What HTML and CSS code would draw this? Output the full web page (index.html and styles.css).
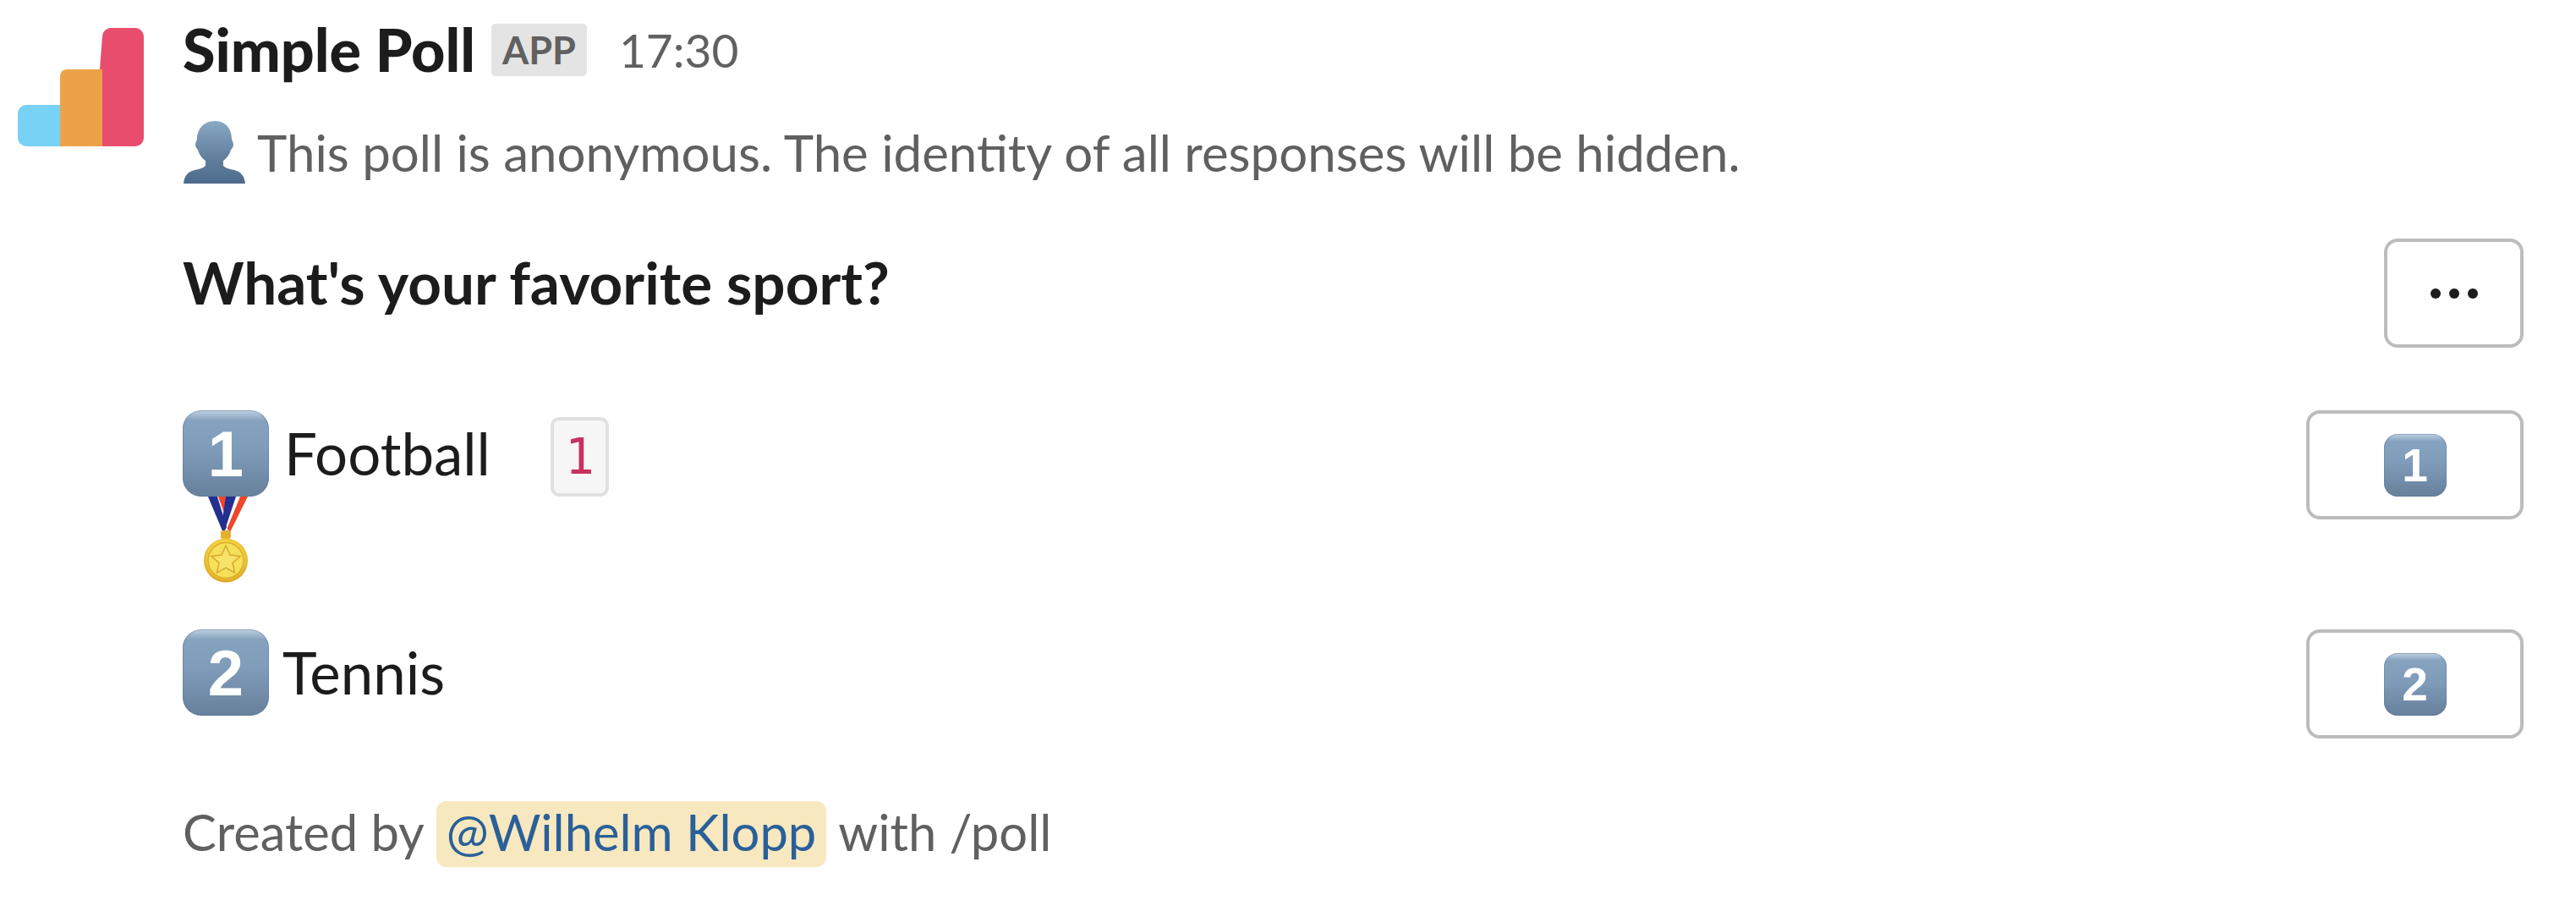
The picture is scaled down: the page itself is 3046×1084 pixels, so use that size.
FILE: index.html
```html
<!DOCTYPE html>
<html lang="en">
<head>
<meta charset="utf-8">
<title>Simple Poll</title>
<link rel="stylesheet" href="styles.css">
</head>
<body>
<svg class="defs" width="0" height="0" aria-hidden="true">
  <defs>
    <linearGradient id="person" x1="0" y1="0" x2="0" y2="1">
      <stop offset="0" stop-color="#8aa9c4"/>
      <stop offset="0.55" stop-color="#64819f"/>
      <stop offset="1" stop-color="#4c6b8b"/>
    </linearGradient>
    <radialGradient id="gold" cx="0.5" cy="0.45" r="0.55">
      <stop offset="0" stop-color="#fbe96a"/>
      <stop offset="0.75" stop-color="#f3cf3f"/>
      <stop offset="1" stop-color="#d9a021"/>
    </radialGradient>
  </defs>
</svg>
<main class="message">
  <svg class="logo" viewBox="0 0 149 140" aria-label="Simple Poll logo">
    <path fill="#e94d6e" d="M100 10a10 10 0 0 1 10-10h29a10 10 0 0 1 10 10v120a10 10 0 0 1-10 10h-49z"/>
    <path fill="#eda24a" d="M50 57a8 8 0 0 1 8-8h42v91H50z"/>
    <path fill="#78d2f6" d="M0 101a10 10 0 0 1 10-10h40v49H10a10 10 0 0 1-10-10z"/>
  </svg>
  <div class="content">
    <header class="head">
      <strong class="name">Simple Poll</strong>
      <span class="badge">APP</span>
      <span class="time">17:30</span>
    </header>
    <p class="context">
      <svg class="person" viewBox="0 0 74 74" aria-hidden="true">
        <path fill="url(#person)" d="M37 0c14 0 20 11 20 21 0 2 2 4 2 7 0 3-2 5-3 6-2 7-6 11-9 13v6c3 3 8 4 13 5 8 2 12 7 13 16H0c1-9 5-14 13-16 5-1 10-2 13-5v-6c-3-2-7-6-9-13-1-1-3-3-3-6 0-3 2-5 2-7C16 11 23 0 37 0z"/>
      </svg>
      This poll is anonymous. The identity of all responses will be hidden.
    </p>
    <section class="row question-row">
      <h1 class="question">What's your favorite sport?</h1>
      <button class="btn btn-more" aria-label="More"><i></i><i></i><i></i></button>
    </section>
    <section class="row option-row first">
      <div class="option">
        <div class="option-line">
          <span class="key key-lg">1</span>
          <span class="label football">Football</span>
          <code class="count">1</code>
        </div>
        <svg class="medal" viewBox="0 0 52 102" aria-hidden="true">
          <path fill="#f0462a" d="M17 0h9l5 16-5 9z"/>
          <path fill="#f0462a" d="M43 0h9L31 42l-4-3z"/>
          <path fill="#eef0f4" d="M26 36l5 6-3 3-4-4z"/>
          <path fill="#23308f" d="M5 0h11l11 36-4 7z"/>
          <path fill="#23308f" d="M26 0h12L25 39l-4-6z"/>
          <rect x="20" y="40" width="12" height="10" rx="3" fill="#e2b02f"/>
          <circle cx="26" cy="75.500" r="26" fill="url(#gold)"/>
          <circle cx="26" cy="75.500" r="21" fill="#f6e05a" stroke="#dcae2b" stroke-width="1.500"/>
          <path fill="#f8e26a" stroke="#d4a92f" stroke-width="1.500" d="M26 58l5 11 12 1.500-9 8 2.500 11.500L26 84l-10.500 6 2.500-11.500-9-8 12-1.500z"/>
        </svg>
      </div>
      <button class="btn btn-option"><span class="key key-sm">1</span></button>
    </section>
    <section class="row option-row second">
      <div class="option-line">
        <span class="key key-lg">2</span>
        <span class="label tennis">Tennis</span>
      </div>
      <button class="btn btn-option"><span class="key key-sm">2</span></button>
    </section>
    <footer class="foot">Created by <span class="mention">@Wilhelm Klopp</span> with /poll</footer>
  </div>
</main>
</body>
</html>
```

FILE: styles.css
```css
* { box-sizing: border-box; }
html, body { margin: 0; padding: 0; background: #fff; }
body { width: 3046px; height: 1084px; overflow: hidden; font-family: Lato, "Noto Sans", sans-serif; color: #1d1c1d; }
.defs { display: block; height: 0; }
.message { display: flex; align-items: flex-start; padding: 33px 62px 0 21px; }
.logo { width: 149px; height: 140px; flex: none; margin-right: 46px; }
.content { flex: 1; min-width: 0; margin-top: -33px; }
.head { display: flex; align-items: center; height: 118px; }
.name { font-size: 70px; font-weight: 900; margin-top: -3px; }
.badge { margin-left: 19px; padding: 0 13px; height: 62px; line-height: 62px; background: #e4e4e4; color: #616061; font-size: 45px; font-weight: 700; border-radius: 5px; }
.time { margin-left: 38px; font-size: 55px; color: #616061; }
.context { margin: 22px 0 0; height: 80px; display: flex; align-items: center; font-size: 60px; color: #616061; }
.person { width: 74px; height: 74px; margin: 0 13px 0 1px; flex: none; }
.row { display: flex; justify-content: space-between; align-items: flex-start; }
.question-row { margin-top: 62px; }
.question { margin: 0; padding-top: 12px; font-size: 69.200px; font-weight: 700; line-height: 80px; }
.btn { display: flex; align-items: center; justify-content: center; height: 129px; padding: 0; border: 4px solid #bcbcbc; border-radius: 16px; background: #fff; }
.btn-more { width: 165px; gap: 10px; }
.btn-more i { width: 12px; height: 12px; border-radius: 50%; background: #1d1c1d; }
.btn-option { width: 257px; }
.option-row.first { margin-top: 74px; }
.option-row.second { margin-top: 55px; }
.option-line { display: flex; align-items: flex-start; }
.key { display: flex; align-items: center; justify-content: center; color: #fff; font-family: "Liberation Sans", sans-serif; font-weight: 700; background: linear-gradient(#c0d0e0 0, #85a2bf 12%, #7f9cba 45%, #67809b 100%); box-shadow: inset 0 0 0 1px rgba(90, 120, 150, .45); }
.key-lg { width: 102px; height: 102px; border-radius: 22px; font-size: 76px; }
.key-sm { width: 74px; height: 74px; border-radius: 16px; font-size: 55px; }
.label { font-size: 69px; line-height: 102px; }
.football { margin-left: 18px; }
.tennis { margin-left: 16px; }
.count { display: block; margin: 8px 0 0 71px; width: 69px; height: 94px; line-height: 86px; text-align: center; font-family: "DejaVu Sans Mono", monospace; font-size: 58px; color: #c9315e; background: #f6f6f6; border: 4px solid #e0e0e0; border-radius: 10px; }
.medal { display: block; width: 52px; height: 102px; margin-left: 25px; }
.foot { margin-top: 74px; font-size: 59.700px; line-height: 72px; color: #616061; }
.mention { display: inline-block; padding: 0 12px 6px; color: #2a6099; background: #f7e8bf; border-radius: 12px; }
```
